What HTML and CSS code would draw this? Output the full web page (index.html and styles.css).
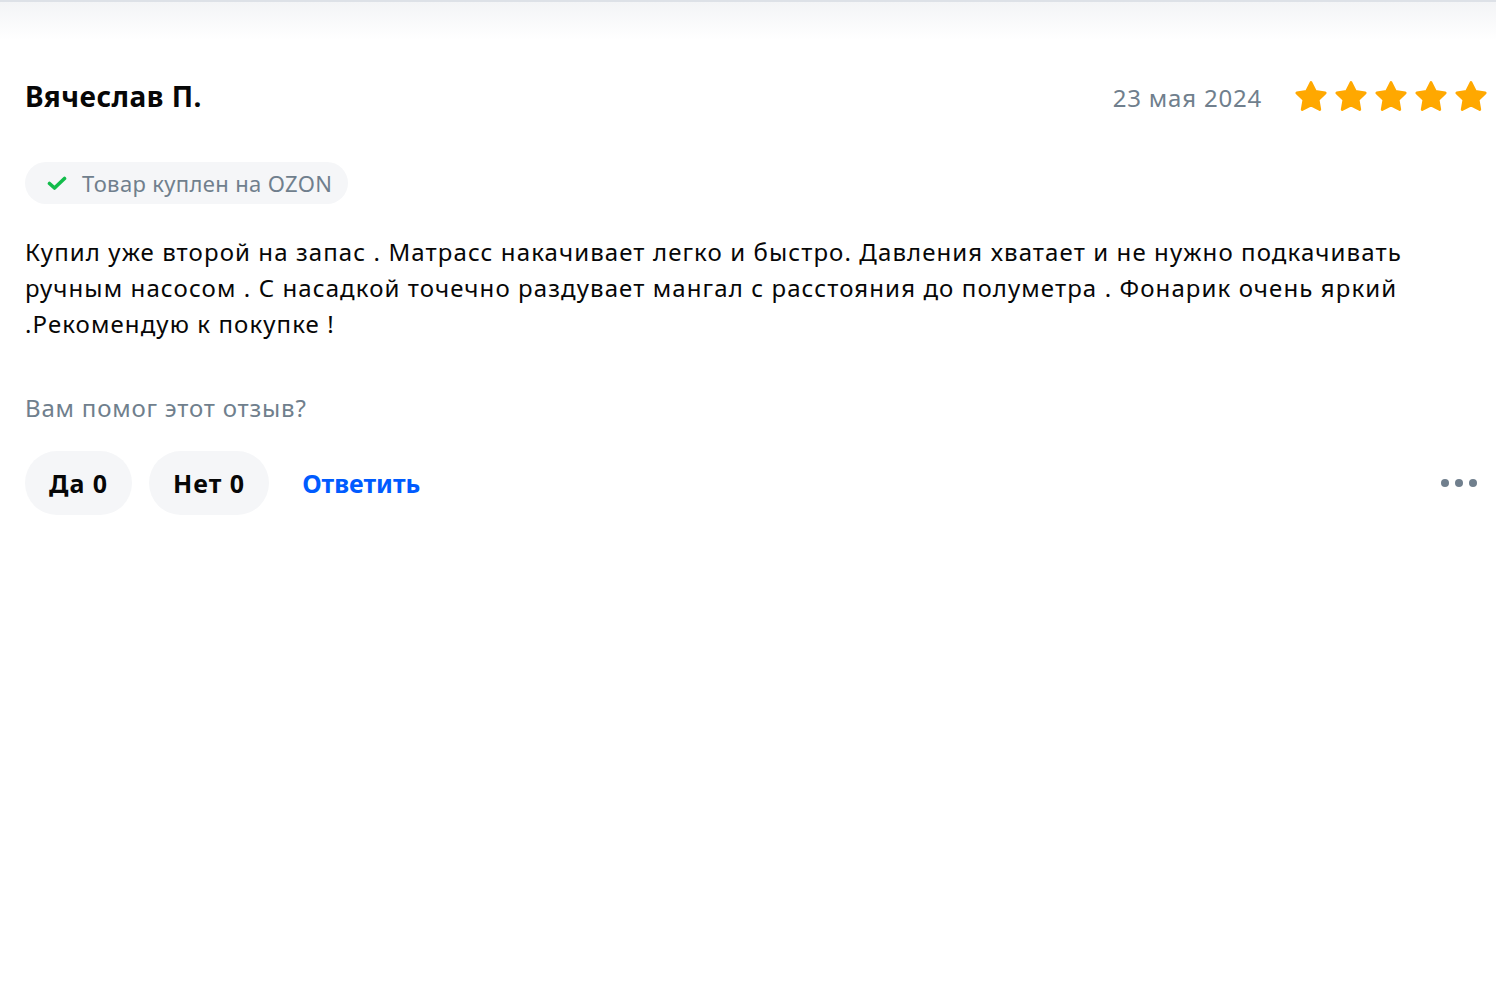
FILE: index.html
```html
<!DOCTYPE html>
<html lang="ru">
<head>
<meta charset="utf-8">
<title>Отзыв</title>
<link rel="stylesheet" href="styles.css">
</head>
<body>
<div class="topbar"></div>
<div class="review">
  <div class="head">
    <div class="name">Вячеслав П.</div>
    <div class="meta">
      <span class="date">23 мая 2024</span>
      <div class="stars">
        <svg class="star" viewBox="0 0 24 24"><path d="M12 1.8l3.1 6.3 6.9 1-5 4.9 1.2 6.9L12 17.6l-6.2 3.3L7 14l-5-4.9 6.9-1z" fill="#ffa800" stroke="#ffa800" stroke-width="2" stroke-linejoin="round"/></svg>
        <svg class="star" viewBox="0 0 24 24"><path d="M12 1.8l3.1 6.3 6.9 1-5 4.9 1.2 6.9L12 17.6l-6.2 3.3L7 14l-5-4.9 6.9-1z" fill="#ffa800" stroke="#ffa800" stroke-width="2" stroke-linejoin="round"/></svg>
        <svg class="star" viewBox="0 0 24 24"><path d="M12 1.8l3.1 6.3 6.9 1-5 4.9 1.2 6.9L12 17.6l-6.2 3.3L7 14l-5-4.9 6.9-1z" fill="#ffa800" stroke="#ffa800" stroke-width="2" stroke-linejoin="round"/></svg>
        <svg class="star" viewBox="0 0 24 24"><path d="M12 1.8l3.1 6.3 6.9 1-5 4.9 1.2 6.9L12 17.6l-6.2 3.3L7 14l-5-4.9 6.9-1z" fill="#ffa800" stroke="#ffa800" stroke-width="2" stroke-linejoin="round"/></svg>
        <svg class="star" viewBox="0 0 24 24"><path d="M12 1.8l3.1 6.3 6.9 1-5 4.9 1.2 6.9L12 17.6l-6.2 3.3L7 14l-5-4.9 6.9-1z" fill="#ffa800" stroke="#ffa800" stroke-width="2" stroke-linejoin="round"/></svg>
      </div>
    </div>
  </div>
  <div class="badge">
    <svg class="check" viewBox="0 0 20 20"><path d="M2.5 10.5l5 4.5L17.5 5.5" fill="none" stroke="#12bc4b" stroke-width="3.6" stroke-linecap="round" stroke-linejoin="round"/></svg>
    <span>Товар куплен на OZON</span>
  </div>
  <p class="text">Купил уже второй на запас . Матрасс накачивает легко и быстро. Давления хватает и не нужно подкачивать<br>ручным насосом . С насадкой точечно раздувает мангал с расстояния до полуметра . Фонарик очень яркий<br>.Рекомендую к покупке !</p>
  <div class="helpful">Вам помог этот отзыв?</div>
  <div class="actions">
    <button class="pill">Да 0</button>
    <button class="pill">Нет 0</button>
    <button class="reply">Ответить</button>
    <div class="more"><span></span><span></span><span></span></div>
  </div>
</div>
</body>
</html>
```

FILE: styles.css
```css
* { box-sizing: border-box; }
html, body { margin: 0; padding: 0; background: #fff; }
body {
  font-family: "Noto Sans", "DejaVu Sans", sans-serif;
  color: #001a34;
}
.topbar {
  height: 40px;
  border-top: 2px solid #dde1e7;
  background: linear-gradient(#f3f4f6, #ffffff);
}
.review {
  padding: 30px 10px 0 25px;
}
.head {
  display: flex;
  justify-content: space-between;
  align-items: center;
  height: 52px;
}
.name {
  font-size: 28px;
  font-weight: 700;
  color: #070707;
  letter-spacing: 0.5px;
}
.meta {
  display: flex;
  align-items: center;
  gap: 32px;
  padding-top: 2px;
}
.date {
  font-size: 24px;
  color: #707f8d;
  letter-spacing: 0.8px;
}
.stars {
  display: flex;
  gap: 6px;
  margin-right: -2px;
}
.star {
  width: 34px;
  height: 34px;
  display: block;
}
.badge {
  display: inline-flex;
  align-items: center;
  height: 42px;
  margin-top: 40px;
  padding: 0 16px 0 22px;
  background: #f5f6f8;
  border-radius: 21px;
  font-size: 22px;
  letter-spacing: 0.35px;
  color: #707f8d;
  gap: 15px;
}
.check { width: 20px; height: 20px; display: block; }
.text {
  margin: 30px 0 0;
  font-size: 24px;
  letter-spacing: 1.1px;
  line-height: 36px;
  color: #070707;
}
.helpful {
  margin-top: 48px;
  font-size: 24px;
  letter-spacing: 0.8px;
  color: #707f8d;
  line-height: 36px;
}
.actions {
  display: flex;
  align-items: center;
  margin-top: 25px;
  gap: 17px;
}
.pill {
  height: 64px;
  padding: 0 24px;
  border: none;
  border-radius: 32px;
  background: #f5f6f8;
  font-family: inherit;
  font-size: 25px;
  font-weight: 700;
  letter-spacing: 1px;
  color: #070707;
}
.reply {
  border: none;
  background: none;
  padding: 0 0 0 16px;
  font-family: inherit;
  font-size: 25px;
  font-weight: 700;
  color: #005bff;
}
.more {
  margin-left: auto;
  display: flex;
  gap: 6px;
  padding-right: 9px;
}
.more span {
  width: 8px;
  height: 8px;
  border-radius: 50%;
  background: #707f8d;
}
```
